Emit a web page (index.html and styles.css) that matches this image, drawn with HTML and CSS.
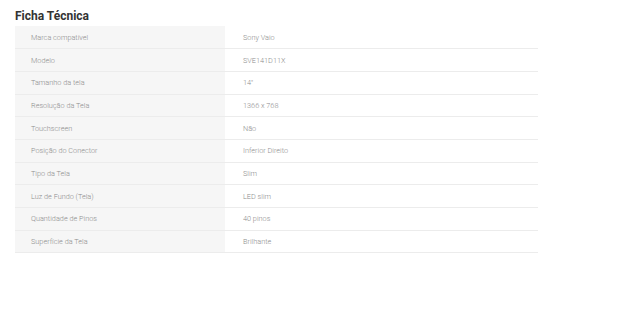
FILE: index.html
```html
<!DOCTYPE html>
<html lang="pt-BR">
<head>
<meta charset="utf-8">
<title>Ficha Técnica</title>
<link rel="stylesheet" href="styles.css">
</head>
<body>
<section class="spec">
  <h2 class="spec-title">Ficha Técnica</h2>
  <table class="spec-table">
    <tbody>
      <tr><th>Marca compatível</th><td>Sony Vaio</td></tr>
      <tr><th>Modelo</th><td>SVE141D11X</td></tr>
      <tr><th>Tamanho da tela</th><td>14"</td></tr>
      <tr><th>Resolução da Tela</th><td>1366 x 768</td></tr>
      <tr><th>Touchscreen</th><td>Não</td></tr>
      <tr><th>Posição do Conector</th><td>Inferior Direito</td></tr>
      <tr><th>Tipo da Tela</th><td>Slim</td></tr>
      <tr><th>Luz de Fundo (Tela)</th><td>LED slim</td></tr>
      <tr><th>Quantidade de Pinos</th><td>40 pinos</td></tr>
      <tr><th>Superfície da Tela</th><td>Brilhante</td></tr>
    </tbody>
  </table>
</section>
</body>
</html>
```
FILE: styles.css
```css
html, body {
  margin: 0;
  padding: 0;
  background: #fff;
}
body {
  font-family: Roboto, "Liberation Sans", sans-serif;
}
.spec {
  padding: 7px 0 0 15px;
  width: 523px;
}
.spec-title {
  margin: 0;
  font-size: 12px;
  line-height: 19px;
  font-weight: 700;
  color: #333;
}
.spec-table {
  width: 523px;
  border-collapse: collapse;
  font-size: 7.3px;
  color: #8c8c8c;
}
.spec-table tr {
  height: 22.7px;
  border-bottom: 1px solid #ececec;
}
.spec-table th,
.spec-table td {
  padding: 0;
  text-align: left;
  font-weight: 300;
  vertical-align: middle;
}
.spec-table th {
  width: 194px;
  padding-left: 16px;
  background: #f6f6f6;
}
.spec-table td {
  padding-left: 18px;
  background: #fff;
}
```
